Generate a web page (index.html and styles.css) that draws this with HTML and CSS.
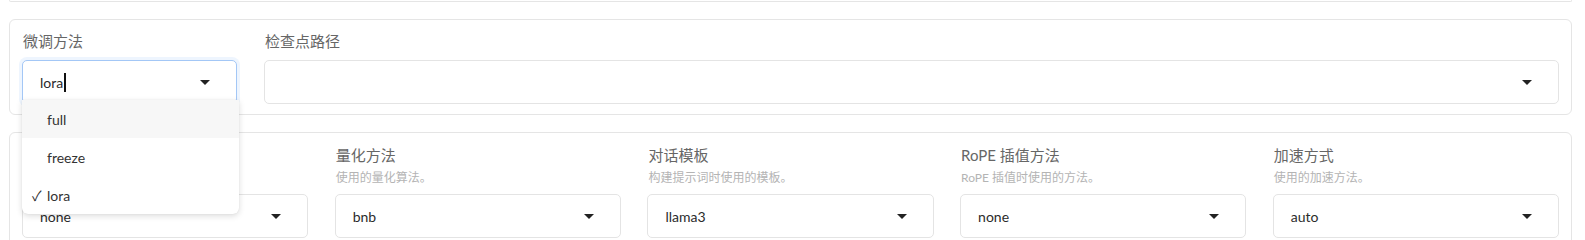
FILE: index.html
```html
<!DOCTYPE html>
<html lang="zh">
<head>
<meta charset="utf-8">
<title>LLaMA Factory</title>
<link rel="stylesheet" href="styles.css">
</head>
<body>
<div class="page">
  <div class="prev-box"></div>

  <div class="box">
    <div class="row row-top">
      <div class="field">
        <div class="label">微调方法</div>
        <div class="select-wrap">
          <div class="select focused">
            <span class="value">lora<span class="caret"></span></span>
            <svg class="arrow" width="10" height="5" viewBox="0 0 10 5"><path d="M0 0H10L5 5Z" fill="#222"/></svg>
          </div>
          <ul class="menu">
            <li class="option active"><span class="check">✓</span>full</li>
            <li class="option"><span class="check">✓</span>freeze</li>
            <li class="option selected"><span class="check">✓</span>lora</li>
          </ul>
        </div>
      </div>
      <div class="field">
        <div class="label">检查点路径</div>
        <div class="select">
          <span class="value"></span>
          <svg class="arrow" width="10" height="5" viewBox="0 0 10 5"><path d="M0 0H10L5 5Z" fill="#222"/></svg>
        </div>
      </div>
    </div>
  </div>

  <div class="box">
    <div class="row row-five">
      <div class="field">
        <div class="label label-empty"></div>
        <div class="info info-empty"></div>
        <div class="select">
          <span class="value">none</span>
          <svg class="arrow" width="10" height="5" viewBox="0 0 10 5"><path d="M0 0H10L5 5Z" fill="#222"/></svg>
        </div>
      </div>
      <div class="field">
        <div class="label">量化方法</div>
        <div class="info">使用的量化算法。</div>
        <div class="select">
          <span class="value">bnb</span>
          <svg class="arrow" width="10" height="5" viewBox="0 0 10 5"><path d="M0 0H10L5 5Z" fill="#222"/></svg>
        </div>
      </div>
      <div class="field">
        <div class="label">对话模板</div>
        <div class="info">构建提示词时使用的模板。</div>
        <div class="select">
          <span class="value">llama3</span>
          <svg class="arrow" width="10" height="5" viewBox="0 0 10 5"><path d="M0 0H10L5 5Z" fill="#222"/></svg>
        </div>
      </div>
      <div class="field">
        <div class="label">RoPE 插值方法</div>
        <div class="info">RoPE 插值时使用的方法。</div>
        <div class="select">
          <span class="value">none</span>
          <svg class="arrow" width="10" height="5" viewBox="0 0 10 5"><path d="M0 0H10L5 5Z" fill="#222"/></svg>
        </div>
      </div>
      <div class="field">
        <div class="label">加速方式</div>
        <div class="info">使用的加速方法。</div>
        <div class="select">
          <span class="value">auto</span>
          <svg class="arrow" width="10" height="5" viewBox="0 0 10 5"><path d="M0 0H10L5 5Z" fill="#222"/></svg>
        </div>
      </div>
    </div>
  </div>
</div>
</body>
</html>
```

FILE: styles.css
```css
html, body {
  margin: 0;
  padding: 0;
  overflow: hidden;
  background: #ffffff;
}

body {
  font-family: Lato, "Noto Sans CJK SC", sans-serif;
  color: #333333;
}

.page {
  padding: 0 13px 0 9px;
}

.prev-box {
  height: 1px;
  border: 1px solid #e5e5e5;
  border-top: none;
  border-radius: 0 0 6px 6px;
  margin-bottom: 17px;
}

.box {
  border: 1px solid #e5e5e5;
  border-radius: 6px;
  padding: 11px 12px 10px;
  margin-bottom: 17px;
}

.box + .box {
  padding-top: 12px;
}

.row {
  display: grid;
  align-items: start;
}

.row-top {
  grid-template-columns: 215px 1fr;
  column-gap: 27px;
}

.row-five {
  grid-template-columns: repeat(5, 1fr);
  column-gap: 26.5px;
}

.field {
  display: flex;
  flex-direction: column;
  min-width: 0;
}

.label {
  font-size: 15px;
  line-height: 20px;
  color: #666666;
  padding-left: 1px;
  margin-bottom: 9px;
}

.row-five .label {
  margin-bottom: 4px;
}

.label-empty {
  height: 20px;
}

.info {
  font-size: 12px;
  line-height: 18px;
  color: #b4b4b4;
  padding-left: 1px;
  margin-bottom: 7px;
}

.info-empty {
  height: 18px;
}

.select-wrap {
  position: relative;
}

.select {
  box-sizing: border-box;
  height: 44px;
  border: 1px solid #e4e4e4;
  border-radius: 5px;
  display: flex;
  align-items: center;
  padding-left: 17px;
  background: #ffffff;
}

.select.focused {
  border-color: #a3c7f6;
  box-shadow: 0 0 0 3px #eef5fe;
}

.value {
  flex: 1;
  font-size: 14px;
  color: #2b2b2b;
  display: flex;
  align-items: center;
}

.caret {
  display: inline-block;
  width: 2px;
  height: 19px;
  background: #111111;
  margin-left: 1px;
}

.arrow {
  flex: none;
  margin-right: 26px;
}

.menu {
  position: absolute;
  top: 40px;
  left: 0;
  width: 217px;
  margin: 0;
  padding: 0;
  list-style: none;
  background: #ffffff;
  border-radius: 0 0 6px 6px;
  box-shadow: 0 2px 6px rgba(0, 0, 0, 0.14), 0 0 1px rgba(0, 0, 0, 0.12);
  z-index: 5;
  overflow: hidden;
}

.option {
  height: 38px;
  display: flex;
  align-items: center;
  padding-left: 10px;
  font-size: 14px;
  color: #333333;
}

.option.active {
  background: #f7f7f7;
}

.check {
  width: 15px;
  visibility: hidden;
  color: #333333;
}

.option.selected .check {
  visibility: visible;
}
```
